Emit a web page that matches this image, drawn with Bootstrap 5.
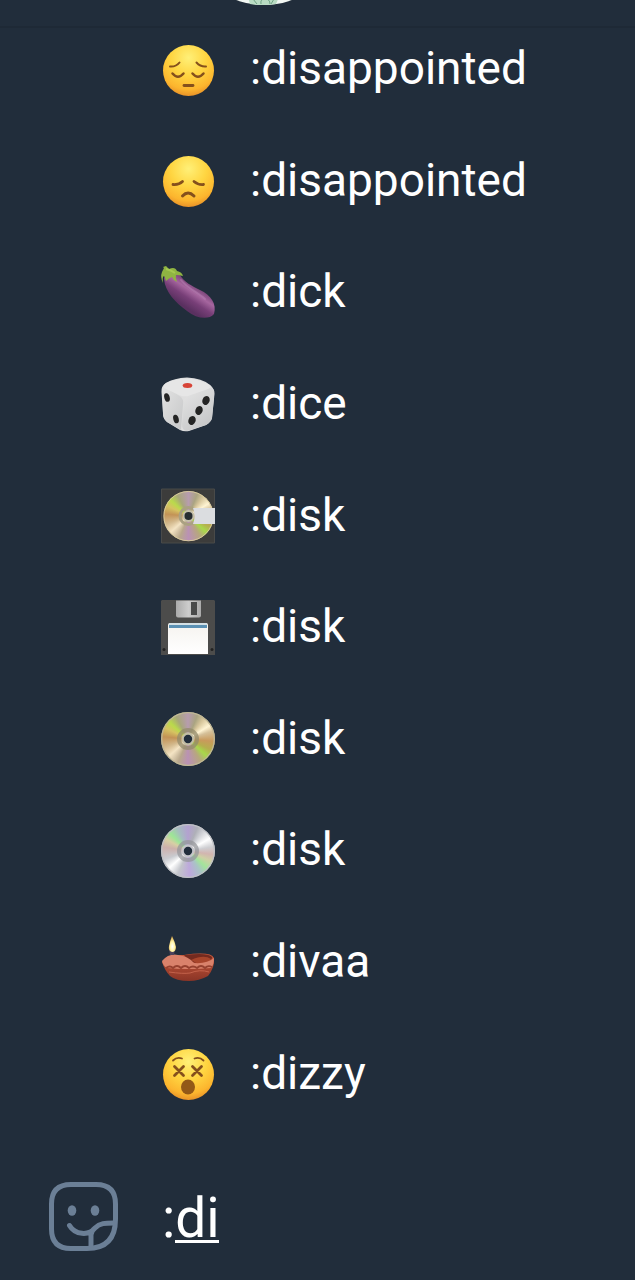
<!DOCTYPE html>
<html lang="en">
<head>
<meta charset="utf-8">
<meta name="viewport" content="width=device-width, initial-scale=1">
<title>Emoji suggestions</title>
<link href="https://cdn.jsdelivr.net/npm/bootstrap@5.3.0/dist/css/bootstrap.min.css" rel="stylesheet">
<style>
body { background: #212d3b; color: #fff; font-family: Roboto, "Noto Sans", sans-serif; }
.topbar { height: 28px; border-bottom: 2px solid #1e2936; }
.avatar { width: 100px; height: 100px; margin: -95px 0 0 214px; }
.suggestions { margin-top: -14px; }
.suggestion { flex: 1 1 0; min-height: 88px; padding: 0 24px 0 150px; gap: 20px; font-size: 46px; line-height: 56px; color: #fff; background: none; border: 0; text-align: left; }
.suggestion:hover, .suggestion:focus { background: #2a3848; color: #fff; }
.suggestion span { padding-bottom: 3px; }
.glyph { width: 80px; height: 80px; flex: none; }
.composer { height: 150px; padding: 22px 24px 0 48px; gap: 43px; }
.sticker { width: 71px; height: 71px; color: #6b7f96; }
.message { color: #fff; font-size: 55px; line-height: 60px; height: 64px; padding: 4px 0 0; min-width: 0; outline: 0;
  background: linear-gradient(#fff, #fff) 13px 56px / 44px 3px no-repeat; }
.disc { width: 54px; height: 54px; border-radius: 50%; }
.gold { background: conic-gradient(#b79caf 0deg, #aaa481 22deg, #d7c69b 38deg, #fff4d3 58deg, #d5c099 72deg, #c99a5c 95deg, #b5af4e 116deg, #a8d84b 132deg, #b7a77e 150deg, #ba91b5 180deg, #b9a88c 203deg, #f4e4c4 228deg, #d3b98d 250deg, #c39356 275deg, #d6c361 296deg, #bada4b 312deg, #a8a779 332deg, #b79caf 360deg); }
.silver { background: conic-gradient(#b3a1d0 0deg, #afb0b8 22deg, #d9dade 42deg, #fff 60deg, #ceced2 80deg, #d2b5b0 98deg, #ced0a5 114deg, #a3e49b 132deg, #a9c4c5 149deg, #bda8dc 176deg, #c3c5cb 204deg, #fff 228deg, #c9cbd0 250deg, #ccb0ac 279deg, #d7cfa4 298deg, #9de696 314deg, #a6bdbf 335deg, #b3a1d0 360deg); }
</style>
</head>
<body>
<svg width="0" height="0" class="position-absolute" aria-hidden="true">
  <defs>
    <radialGradient id="face" cx=".5" cy=".25" r=".78"><stop offset="0" stop-color="#fff078"/><stop offset=".45" stop-color="#ffd541"/><stop offset=".8" stop-color="#fcb52e"/><stop offset="1" stop-color="#e48a27"/></radialGradient>
    <linearGradient id="plum" gradientUnits="userSpaceOnUse" x1="45" y1="30" x2="31" y2="51"><stop offset="0" stop-color="#6b3a6c"/><stop offset=".35" stop-color="#a6669f"/><stop offset=".65" stop-color="#783f78"/><stop offset="1" stop-color="#5a3060"/></linearGradient>
    <linearGradient id="dieleft" x1="0" y1="0" x2="1" y2="1"><stop offset="0" stop-color="#e2e2e2"/><stop offset="1" stop-color="#c6c7c8"/></linearGradient>
    <linearGradient id="dieright" x1="0" y1="0" x2=".6" y2="1"><stop offset="0" stop-color="#e6e6e6"/><stop offset="1" stop-color="#c6c7c8"/></linearGradient>
    <linearGradient id="paper" x1="0" y1="0" x2="0" y2="1"><stop offset="0" stop-color="#f5f3ef"/><stop offset="1" stop-color="#fff"/></linearGradient>
    <linearGradient id="shutter"><stop offset="0" stop-color="#aaa"/><stop offset=".5" stop-color="#ccc"/><stop offset="1" stop-color="#aaa"/></linearGradient>
    <linearGradient id="clay" x1="0" y1="0" x2="0" y2="1"><stop offset="0" stop-color="#c95a3c"/><stop offset="1" stop-color="#8a3426"/></linearGradient>
    <radialGradient id="flame" cx=".5" cy=".65" r=".6"><stop offset="0" stop-color="#fff"/><stop offset=".5" stop-color="#fff5a9"/><stop offset="1" stop-color="#d9a547"/></radialGradient>
  </defs>
</svg>

<div class="d-flex flex-column min-vh-100 overflow-hidden">
  <header class="topbar overflow-hidden">
    <svg class="avatar d-block" viewBox="0 0 100 100" aria-hidden="true">
      <ellipse cx="50" cy="50" rx="64" ry="50" fill="#f2f7f3"/>
      <path d="M34 92h31l-3 7q-12 2-26 0z" fill="#b9dcc3"/>
      <path d="M39 94l4 5M47 99q-1-5 4-5t5 5M60 94l-3 5" stroke="#6fa284" stroke-width="1" fill="none"/>
    </svg>
  </header>

  <main class="suggestions list-group list-group-flush flex-grow-1" aria-label="Emoji suggestions">
    <button type="button" class="suggestion list-group-item-action d-flex align-items-center">
      <svg class="glyph" viewBox="0 0 80 80" aria-hidden="true"><circle cx="38.5" cy="40.500" r="25.500" fill="url(#face)"/><g fill="none" stroke="#85501c" stroke-linecap="round"><path d="M20 36.500q6 .5 9.500-4M46.500 32.500q4 4.500 9.500 4" stroke-width="2"/><path d="M22.500 43.500q5.500 6.500 11 0M42.500 43.500q5.500 6.500 11 0" stroke-width="2.500"/><path d="M34 55.500h9" stroke-width="2.800"/></g></svg>
      <span>:disappointed</span>
    </button>
    <button type="button" class="suggestion list-group-item-action d-flex align-items-center">
      <svg class="glyph" viewBox="0 0 80 80" aria-hidden="true"><circle cx="38.5" cy="40.500" r="25.500" fill="url(#face)"/><g fill="none" stroke="#85501c" stroke-linecap="round"><path d="M23 43.500q6 .5 9.500-3M44 40.500q4 3.500 9.500 3" stroke-width="2.800"/><path d="M32.500 55q5.500-6 11.500 0" stroke-width="3"/></g></svg>
      <span>:disappointed</span>
    </button>
    <button type="button" class="suggestion list-group-item-action d-flex align-items-center">
      <svg class="glyph" viewBox="0 0 80 80" aria-hidden="true"><path d="M14 26C15 19 23 17 30 22C34 29 42 33 50 37C61 42 67 51 64 61C59 67 47 66 37 58C26 50 15 39 14 26Z" fill="url(#plum)"/><path d="M31 27C37 35 47 39 55 46" fill="none" stroke="#ba82b5" stroke-width="2" stroke-linecap="round" opacity=".5"/><path d="M13 14l3-1 3 3q6-3 8 2 5 1 6 5-4-1-7-1-1 3 1 7-4-2-5-5-3 1-6 4-1-4-2-5-2 1-1 7-3-6-1-11 1-2 2-4z" fill="#8fb442"/><path d="M16 16q5 1 9 4" stroke="#a5c850" stroke-width="2" fill="none"/></svg>
      <span>:dick</span>
    </button>
    <button type="button" class="suggestion list-group-item-action d-flex align-items-center">
      <svg class="glyph" viewBox="0 0 80 80" aria-hidden="true"><path d="M16 18Q24 13 37 12.500Q52 13 60 20Q66 24 64 34L62 53Q61 57 56 60L39 66Q34 67 30 65L17 57Q13 54 13 48L11.500 27Q11 21 16 18Z" fill="#dedede"/><path d="M12 24Q15 21 31 32Q34 35 33 40L31 65L17 57Q13 54 13 48Z" fill="url(#dieleft)"/><path d="M34 35Q36 31 40 30L60 23Q65 21 64 32L62 53Q61 57 56 60L37 66Q32 66 32 59Z" fill="url(#dieright)"/><path d="M16 18Q38 8 60 20Q62 22 58 24L38 31Q33 32 29 30L14 23Q12 21 16 18Z" fill="#e6e6e6"/><ellipse cx="37.500" cy="20.500" rx="4.800" ry="2.500" fill="#d74437"/><g fill="#242424"><ellipse cx="17" cy="32.500" rx="2.700" ry="4.400" transform="rotate(-15 17 32.500)"/><ellipse cx="26" cy="54" rx="2.700" ry="4.400" transform="rotate(-15 26 54)"/><ellipse cx="56" cy="35.500" rx="3.600" ry="4.600" transform="rotate(22 56 35.500)"/><ellipse cx="49" cy="45.500" rx="3.600" ry="4.600" transform="rotate(22 49 45.500)"/><ellipse cx="42" cy="55.500" rx="3.600" ry="4.600" transform="rotate(22 42 55.500)"/></g></svg>
      <span>:dice</span>
    </button>
    <button type="button" class="suggestion list-group-item-action d-flex align-items-center">
      <svg class="glyph" viewBox="0 0 80 80" aria-hidden="true"><path d="M11.500 13h53v54h-53z" fill="#3c3c3b" stroke="#494a49"/><g transform="translate(13.400 15) scale(.93)"><foreignObject width="54" height="54"><div class="disc gold"></div></foreignObject><circle cx="27" cy="27" r="26.500" fill="none" stroke="#d8ca9c"/></g><circle cx="38.500" cy="40" r="8.500" fill="none" stroke="#aaa182" stroke-width="3"/><circle cx="38.500" cy="40" r="5" fill="#262d31" stroke="#c4c0aa" stroke-width="2"/><path d="M43 32h22v16H43q3-8 0-16z" fill="#dbdde0"/></svg>
      <span>:disk</span>
    </button>
    <button type="button" class="suggestion list-group-item-action d-flex align-items-center">
      <svg class="glyph" viewBox="0 0 80 80" aria-hidden="true"><path d="M12 12h52l1 1v54H11V13z" fill="#4c4c4b"/><path d="M26 12.500h25v15q0 2-2 2H28q-2 0-2-2z" fill="url(#shutter)"/><path d="M41 14h6v13h-6z" fill="#494a4a"/><path d="M18 66V37q0-2 2-2h36q2 0 2 2v29z" fill="url(#paper)"/><path d="M19 37h38v3H19z" fill="#5b91b4"/><path d="M19 35h38v2H19z" fill="#d3e0e5"/><circle cx="14" cy="61.500" r="1.500" fill="#222"/><circle cx="62" cy="61.500" r="1.500" fill="#222"/></svg>
      <span>:disk</span>
    </button>
    <button type="button" class="suggestion list-group-item-action d-flex align-items-center">
      <svg class="glyph" viewBox="0 0 80 80" aria-hidden="true"><foreignObject x="11" y="13" width="54" height="54"><div class="disc gold"></div></foreignObject><circle cx="38" cy="40" r="26.300" fill="none" stroke="#bfb795" stroke-width="1.300"/><circle cx="38" cy="40" r="9" fill="none" stroke="#938b6b" stroke-width="4" opacity=".75"/><circle cx="38" cy="40" r="5.300" fill="#212d3b" stroke="#c1bda5" stroke-width="2.200"/></svg>
      <span>:disk</span>
    </button>
    <button type="button" class="suggestion list-group-item-action d-flex align-items-center">
      <svg class="glyph" viewBox="0 0 80 80" aria-hidden="true"><foreignObject x="11" y="13" width="54" height="54"><div class="disc silver"></div></foreignObject><circle cx="38" cy="40" r="26.300" fill="none" stroke="#bfc1c5" stroke-width="1.300"/><circle cx="38" cy="40" r="9" fill="none" stroke="#96979b" stroke-width="4" opacity=".75"/><circle cx="38" cy="40" r="5.300" fill="#212d3b" stroke="#c4c4c9" stroke-width="2.200"/></svg>
      <span>:disk</span>
    </button>
    <button type="button" class="suggestion list-group-item-action d-flex align-items-center">
      <svg class="glyph" viewBox="0 0 80 80" aria-hidden="true"><path d="M12 39Q18 31 34 32Q61 28 64 35Q65 44 58 53Q49 58 39 58Q26 58 20 53Q15 48 12 39Z" fill="url(#clay)"/><path d="M34 32Q58 29 62 34Q62 40 47 40Q39 39 34 32Z" fill="#732a1f"/><path d="M41 37Q54 31 61 36Q59 42 48 41Z" fill="#a8452b"/><path d="M12 38Q19 30 28 32Q38 33 44 40Q57 41 64 35Q64 42 61 45Q38 47 17 45Q13 43 12 38Z" fill="#d9826b"/><path d="M16 45q4-3 7 0q4-4 8 0q4-4 8 0q4-3 8 0q4-4 8 0q3-3 7-1" fill="none" stroke="#96412f" stroke-width="1.800"/><path d="M19 49q14 2 21 1q10-4 19-1" fill="none" stroke="#c4624b" stroke-width="1"/><path d="M20 32h4l1-6h-6z" fill="#4c435b"/><path d="M22 13Q25 19 26 24Q26 29 22 29Q18 28 19 23Q20 18 22 13Z" fill="url(#flame)"/></svg>
      <span>:divaa</span>
    </button>
    <button type="button" class="suggestion list-group-item-action d-flex align-items-center">
      <svg class="glyph" viewBox="0 0 80 80" aria-hidden="true"><circle cx="38.5" cy="40.500" r="25.500" fill="url(#face)"/><g fill="none" stroke="#85501c" stroke-linecap="round"><path d="M23 26.500q4-4 9-2M44.500 24.500q5-2 9 2" stroke-width="1.800"/><path d="M24.500 32.500l9 9M33.500 32.500l-9 9M42.500 32.500l9 9M51.500 32.500l-9 9" stroke-width="2.800"/></g><ellipse cx="38" cy="53" rx="7" ry="7.500" fill="#935817"/></svg>
      <span>:dizzy</span>
    </button>
  </main>

  <form class="composer d-flex align-items-center">
    <button type="button" class="btn p-0 border-0 flex-shrink-0" aria-label="Stickers">
      <svg class="sticker d-block" viewBox="0 0 71 71" fill="none" stroke="currentColor" stroke-width="5" stroke-linecap="round" stroke-linejoin="round" aria-hidden="true"><path d="M23 3.500H48Q67.500 3.500 67.500 23V38Q67.500 67.500 39 67.500H23Q3.500 67.500 3.500 48V23Q3.500 3.500 23 3.500Z"/><path d="M21.500 44.500C27 54 41 55 47 47C52 42 57 42 66 42M43 66V54Q43 50 47 47"/><ellipse cx="24" cy="29.500" rx="4.300" ry="5.200" fill="currentColor" stroke="none"/><ellipse cx="47" cy="29.500" rx="4.300" ry="5.200" fill="currentColor" stroke="none"/></svg>
    </button>
    <input class="message flex-grow-1 border-0" type="text" value=":di" aria-label="Message" autocomplete="off" spellcheck="false">
  </form>
</div>
<script src="https://cdn.jsdelivr.net/npm/bootstrap@5.3.0/dist/js/bootstrap.bundle.min.js"></script>
</body>
</html>
